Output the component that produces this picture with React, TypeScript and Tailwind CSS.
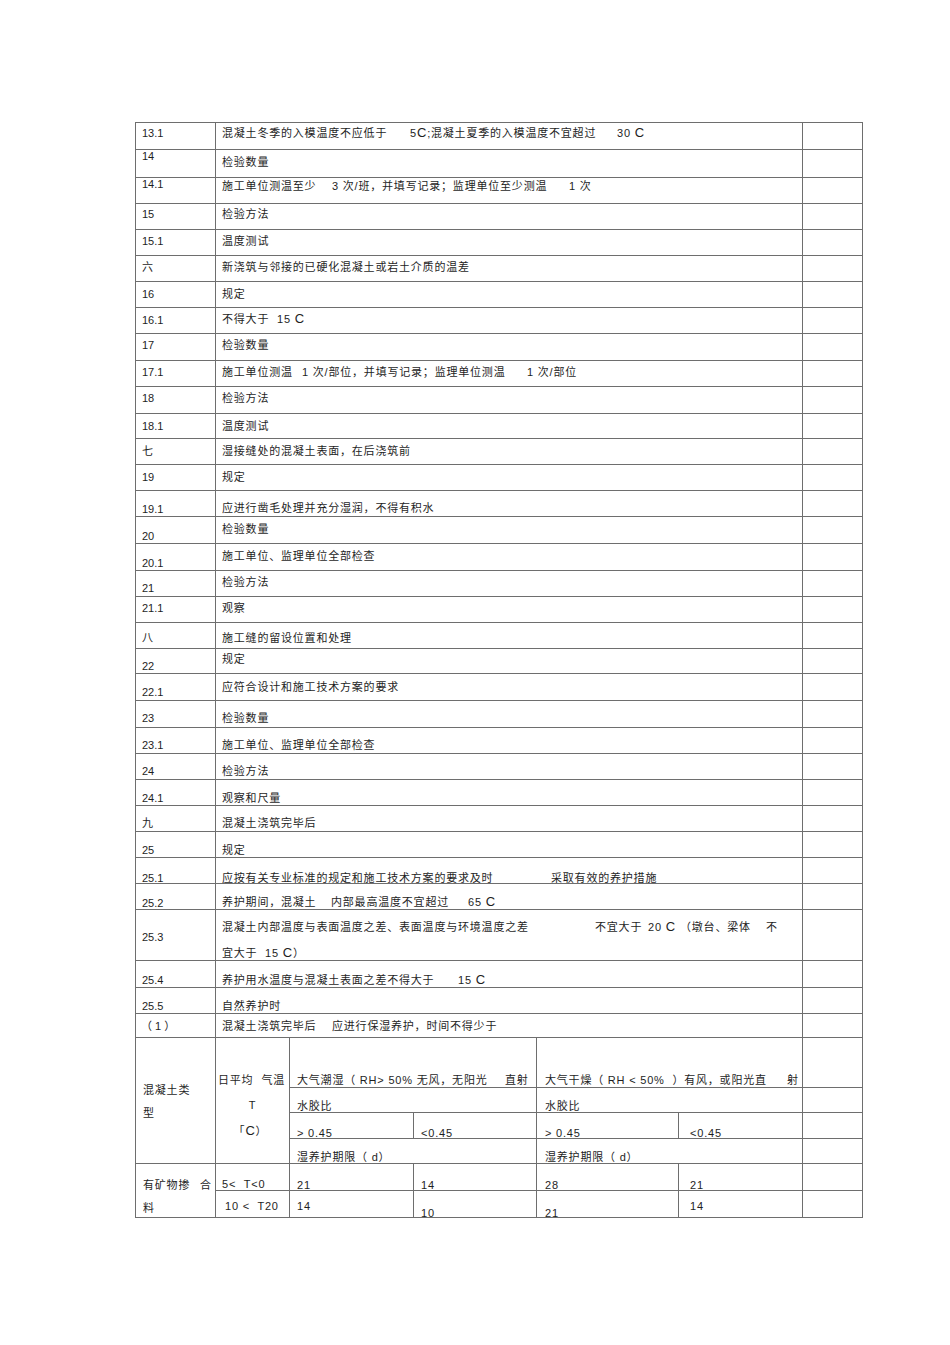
import React from "react";

type Row = {
  h: string;
  lp: string;
  tp: string;
  label: React.ReactNode;
  text: React.ReactNode;
  ll?: string;
};

const C = ({ children }: { children: React.ReactNode }) => (
  <span className="text-[13px]">{children}</span>
);

const rows: Row[] = [
  {
    h: "h-[27px]", lp: "pt-[4px]", tp: "pt-[4px]", label: "13.1",
    text: (
      <>
        <span className="inline-block w-[188px]">混凝土冬季的入模温度不应低于</span>
        <span className="inline-block w-[207px]">5<C>C</C>;混凝土夏季的入模温度不宜超过</span>
        <span>30 <C>C</C></span>
      </>
    ),
  },
  { h: "h-[28px]", lp: "pt-[0px]", tp: "pt-[6px]", label: "14", text: "检验数量" },
  {
    h: "h-[26px]", lp: "pt-[0px]", tp: "pt-[2px]", label: "14.1",
    text: (
      <>
        <span className="inline-block w-[110px]">施工单位测温至少</span>
        <span className="inline-block w-[237px]">3 次/班，并填写记录；监理单位至少测温</span>
        <span>1 次</span>
      </>
    ),
  },
  { h: "h-[26px]", lp: "pt-[4px]", tp: "pt-[4px]", label: "15", text: "检验方法" },
  { h: "h-[26px]", lp: "pt-[5px]", tp: "pt-[5px]", label: "15.1", text: "温度测试" },
  { h: "h-[26px]", lp: "pt-[5px]", tp: "pt-[5px]", label: "六", text: "新浇筑与邻接的已硬化混凝土或岩土介质的温差" },
  { h: "h-[26px]", lp: "pt-[6px]", tp: "pt-[6px]", label: "16", text: "规定" },
  {
    h: "h-[26px]", lp: "pt-[6px]", tp: "pt-[5px]", label: "16.1",
    text: (
      <>
        <span className="inline-block w-[55px]">不得大于</span>
        <span>15 <C>C</C></span>
      </>
    ),
  },
  { h: "h-[27px]", lp: "pt-[5px]", tp: "pt-[5px]", label: "17", text: "检验数量" },
  {
    h: "h-[26px]", lp: "pt-[5px]", tp: "pt-[5px]", label: "17.1",
    text: (
      <>
        <span className="inline-block w-[80px]">施工单位测温</span>
        <span className="inline-block w-[225px]">1 次/部位，并填写记录；监理单位测温</span>
        <span>1 次/部位</span>
      </>
    ),
  },
  { h: "h-[27px]", lp: "pt-[5px]", tp: "pt-[5px]", label: "18", text: "检验方法" },
  { h: "h-[25px]", lp: "pt-[6px]", tp: "pt-[6px]", label: "18.1", text: "温度测试" },
  { h: "h-[26px]", lp: "pt-[6px]", tp: "pt-[6px]", label: "七", text: "湿接缝处的混凝土表面，在后浇筑前" },
  { h: "h-[26px]", lp: "pt-[6px]", tp: "pt-[6px]", label: "19", text: "规定" },
  { h: "h-[26px]", lp: "pt-[12px]", tp: "pt-[11px]", label: "19.1", text: "应进行凿毛处理并充分湿润，不得有积水" },
  { h: "h-[27px]", lp: "pt-[13px]", tp: "pt-[6px]", label: "20", text: "检验数量" },
  { h: "h-[27px]", lp: "pt-[13px]", tp: "pt-[6px]", label: "20.1", text: "施工单位、监理单位全部检查" },
  { h: "h-[26px]", lp: "pt-[11px]", tp: "pt-[5px]", label: "21", text: "检验方法" },
  { h: "h-[26px]", lp: "pt-[5px]", tp: "pt-[5px]", label: "21.1", text: "观察" },
  { h: "h-[26px]", lp: "pt-[9px]", tp: "pt-[9px]", label: "八", text: "施工缝的留设位置和处理" },
  { h: "h-[25px]", lp: "pt-[11px]", tp: "pt-[4px]", label: "22", text: "规定" },
  { h: "h-[27px]", lp: "pt-[12px]", tp: "pt-[7px]", label: "22.1", text: "应符合设计和施工技术方案的要求" },
  { h: "h-[27px]", lp: "pt-[11px]", tp: "pt-[11px]", label: "23", text: "检验数量" },
  { h: "h-[26px]", lp: "pt-[11px]", tp: "pt-[11px]", label: "23.1", text: "施工单位、监理单位全部检查" },
  { h: "h-[26px]", lp: "pt-[11px]", tp: "pt-[11px]", label: "24", text: "检验方法" },
  { h: "h-[26px]", lp: "pt-[12px]", tp: "pt-[12px]", label: "24.1", text: "观察和尺量" },
  { h: "h-[26px]", lp: "pt-[11px]", tp: "pt-[11px]", label: "九", text: "混凝土浇筑完毕后" },
  { h: "h-[26px]", lp: "pt-[12px]", tp: "pt-[12px]", label: "25", text: "规定" },
  {
    h: "h-[26px]", lp: "pt-[14px]", tp: "pt-[14px]", label: "25.1",
    text: (
      <>
        <span className="inline-block w-[329px]">应按有关专业标准的规定和施工技术方案的要求及时</span>
        <span>采取有效的养护措施</span>
      </>
    ),
  },
  {
    h: "h-[26px]", lp: "pt-[13px]", tp: "pt-[12px]", label: "25.2",
    text: (
      <>
        <span className="inline-block w-[109px]">养护期间，混凝土</span>
        <span className="inline-block w-[137px]">内部最高温度不宜超过</span>
        <span>65 <C>C</C></span>
      </>
    ),
  },
  {
    h: "h-[51px]", lp: "pt-[21px]", tp: "pt-[4px] leading-[25px]", label: "25.3",
    text: (
      <>
        <div>
          <span className="inline-block w-[373px]">混凝土内部温度与表面温度之差、表面温度与环境温度之差</span>
          <span className="inline-block w-[53px]">不宜大于</span>
          <span className="inline-block w-[32px]">20 <C>C</C></span>
          <span className="inline-block w-[86px]">（墩台、梁体</span>
          <span>不</span>
        </div>
        <div>
          <span className="inline-block w-[43px]">宜大于</span>
          <span>15 <C>C</C>）</span>
        </div>
      </>
    ),
  },
  {
    h: "h-[27px]", lp: "pt-[13px]", tp: "pt-[13px]", label: "25.4",
    text: (
      <>
        <span className="inline-block w-[236px]">养护用水温度与混凝土表面之差不得大于</span>
        <span>15 <C>C</C></span>
      </>
    ),
  },
  { h: "h-[26px]", lp: "pt-[12px]", tp: "pt-[12px]", label: "25.5", text: "自然养护时" },
  {
    h: "h-[24px]", lp: "pt-[6px]", tp: "pt-[6px]", label: "（ 1 ）", ll: "pl-[5px]",
    text: (
      <>
        <span className="inline-block w-[110px]">混凝土浇筑完毕后</span>
        <span>应进行保湿养护，时间不得少于</span>
      </>
    ),
  },
];

const B = "border-r border-b border-[#6e6e6e]";

export default function App() {
  return (
    <div className="w-[950px] min-h-[1345px] bg-white pt-[122px] pl-[135px] text-[#1e1e1e] text-[11px] leading-[12px] font-['Liberation_Sans','Noto_Sans_CJK_SC',sans-serif]">
      <div className="w-[728px] border-l border-t border-[#6e6e6e]">
        {rows.map((r, i) => (
          <div key={i} className={`flex ${r.h}`}>
            <div className={`w-[80px] shrink-0 ${B} ${r.ll ?? "pl-[6px]"} ${r.lp} whitespace-nowrap`}>
              {r.label}
            </div>
            <div className={`w-[587px] shrink-0 ${B} pl-[6px] tracking-[0.8px] whitespace-nowrap ${r.tp}`}>
              {r.text}
            </div>
            <div className={`w-[60px] shrink-0 ${B}`} />
          </div>
        ))}

        <div className="grid grid-cols-[80px_74px_124px_123px_142px_124px_60px] grid-rows-[50px_25px_26px_25px_27px_27px] tracking-[0.8px] whitespace-nowrap">
          {/* header left */}
          <div className={`col-start-1 row-start-1 row-span-4 ${B} pl-[7px] pt-[41px] leading-[23px]`}>
            <div>混凝土类</div>
            <div>型</div>
          </div>
          <div className={`col-start-2 row-start-1 row-span-4 ${B} pt-[30px] leading-[25px] text-center`}>
            <div className="pr-[2px]">
              <span>日平均</span>
              <span className="ml-[8px]">气温</span>
            </div>
            <div>T</div>
            <div className="pr-[4px]">「<C>C</C>）</div>
          </div>
          <div className={`col-start-3 col-span-2 row-start-1 ${B} pl-[7px] pt-[36px]`}>
            <span className="inline-block w-[208px]">大气潮湿（ RH&gt; 50% 无风，无阳光</span>
            <span>直射</span>
          </div>
          <div className={`col-start-5 col-span-2 row-start-1 ${B} pl-[8px] pt-[36px]`}>
            <span className="inline-block w-[242px]">大气干燥（ RH &lt; 50%&nbsp;&nbsp;）有风，或阳光直</span>
            <span>射</span>
          </div>
          <div className={`col-start-7 row-start-1 ${B}`} />

          {/* row 2 */}
          <div className={`col-start-3 col-span-2 row-start-2 ${B} pl-[7px] pt-[12px]`}>水胶比</div>
          <div className={`col-start-5 col-span-2 row-start-2 ${B} pl-[8px] pt-[12px]`}>水胶比</div>
          <div className={`col-start-7 row-start-2 ${B}`} />

          {/* row 3 */}
          <div className={`col-start-3 row-start-3 ${B} pl-[7px] pt-[14px]`}>&gt; 0.45</div>
          <div className={`col-start-4 row-start-3 ${B} pl-[7px] pt-[14px]`}>&lt;0.45</div>
          <div className={`col-start-5 row-start-3 ${B} pl-[8px] pt-[14px]`}>&gt; 0.45</div>
          <div className={`col-start-6 row-start-3 ${B} pl-[11px] pt-[14px]`}>&lt;0.45</div>
          <div className={`col-start-7 row-start-3 ${B}`} />

          {/* row 4 */}
          <div className={`col-start-3 col-span-2 row-start-4 ${B} pl-[7px] pt-[12px]`}>湿养护期限（ d）</div>
          <div className={`col-start-5 col-span-2 row-start-4 ${B} pl-[8px] pt-[12px]`}>湿养护期限（ d）</div>
          <div className={`col-start-7 row-start-4 ${B}`} />

          {/* data rows */}
          <div className={`col-start-1 row-start-5 row-span-2 ${B} pl-[7px] pt-[10px] leading-[23px]`}>
            <div>
              <span className="inline-block w-[57px]">有矿物掺</span>
              <span>合</span>
            </div>
            <div>料</div>
          </div>
          <div className={`col-start-2 row-start-5 ${B} pl-[6px] pt-[14px]`}>5&lt;&nbsp; T&lt;0</div>
          <div className={`col-start-3 row-start-5 ${B} pl-[7px] pt-[15px]`}>21</div>
          <div className={`col-start-4 row-start-5 ${B} pl-[7px] pt-[15px]`}>14</div>
          <div className={`col-start-5 row-start-5 ${B} pl-[8px] pt-[15px]`}>28</div>
          <div className={`col-start-6 row-start-5 ${B} pl-[11px] pt-[15px]`}>21</div>
          <div className={`col-start-7 row-start-5 ${B}`} />

          <div className={`col-start-2 row-start-6 ${B} pl-[9px] pt-[9px]`}>10 &lt;&nbsp; T20</div>
          <div className={`col-start-3 row-start-6 ${B} pl-[7px] pt-[9px]`}>14</div>
          <div className={`col-start-4 row-start-6 ${B} pl-[7px] pt-[16px]`}>10</div>
          <div className={`col-start-5 row-start-6 ${B} pl-[8px] pt-[16px]`}>21</div>
          <div className={`col-start-6 row-start-6 ${B} pl-[11px] pt-[9px]`}>14</div>
          <div className={`col-start-7 row-start-6 ${B}`} />
        </div>
      </div>
    </div>
  );
}
